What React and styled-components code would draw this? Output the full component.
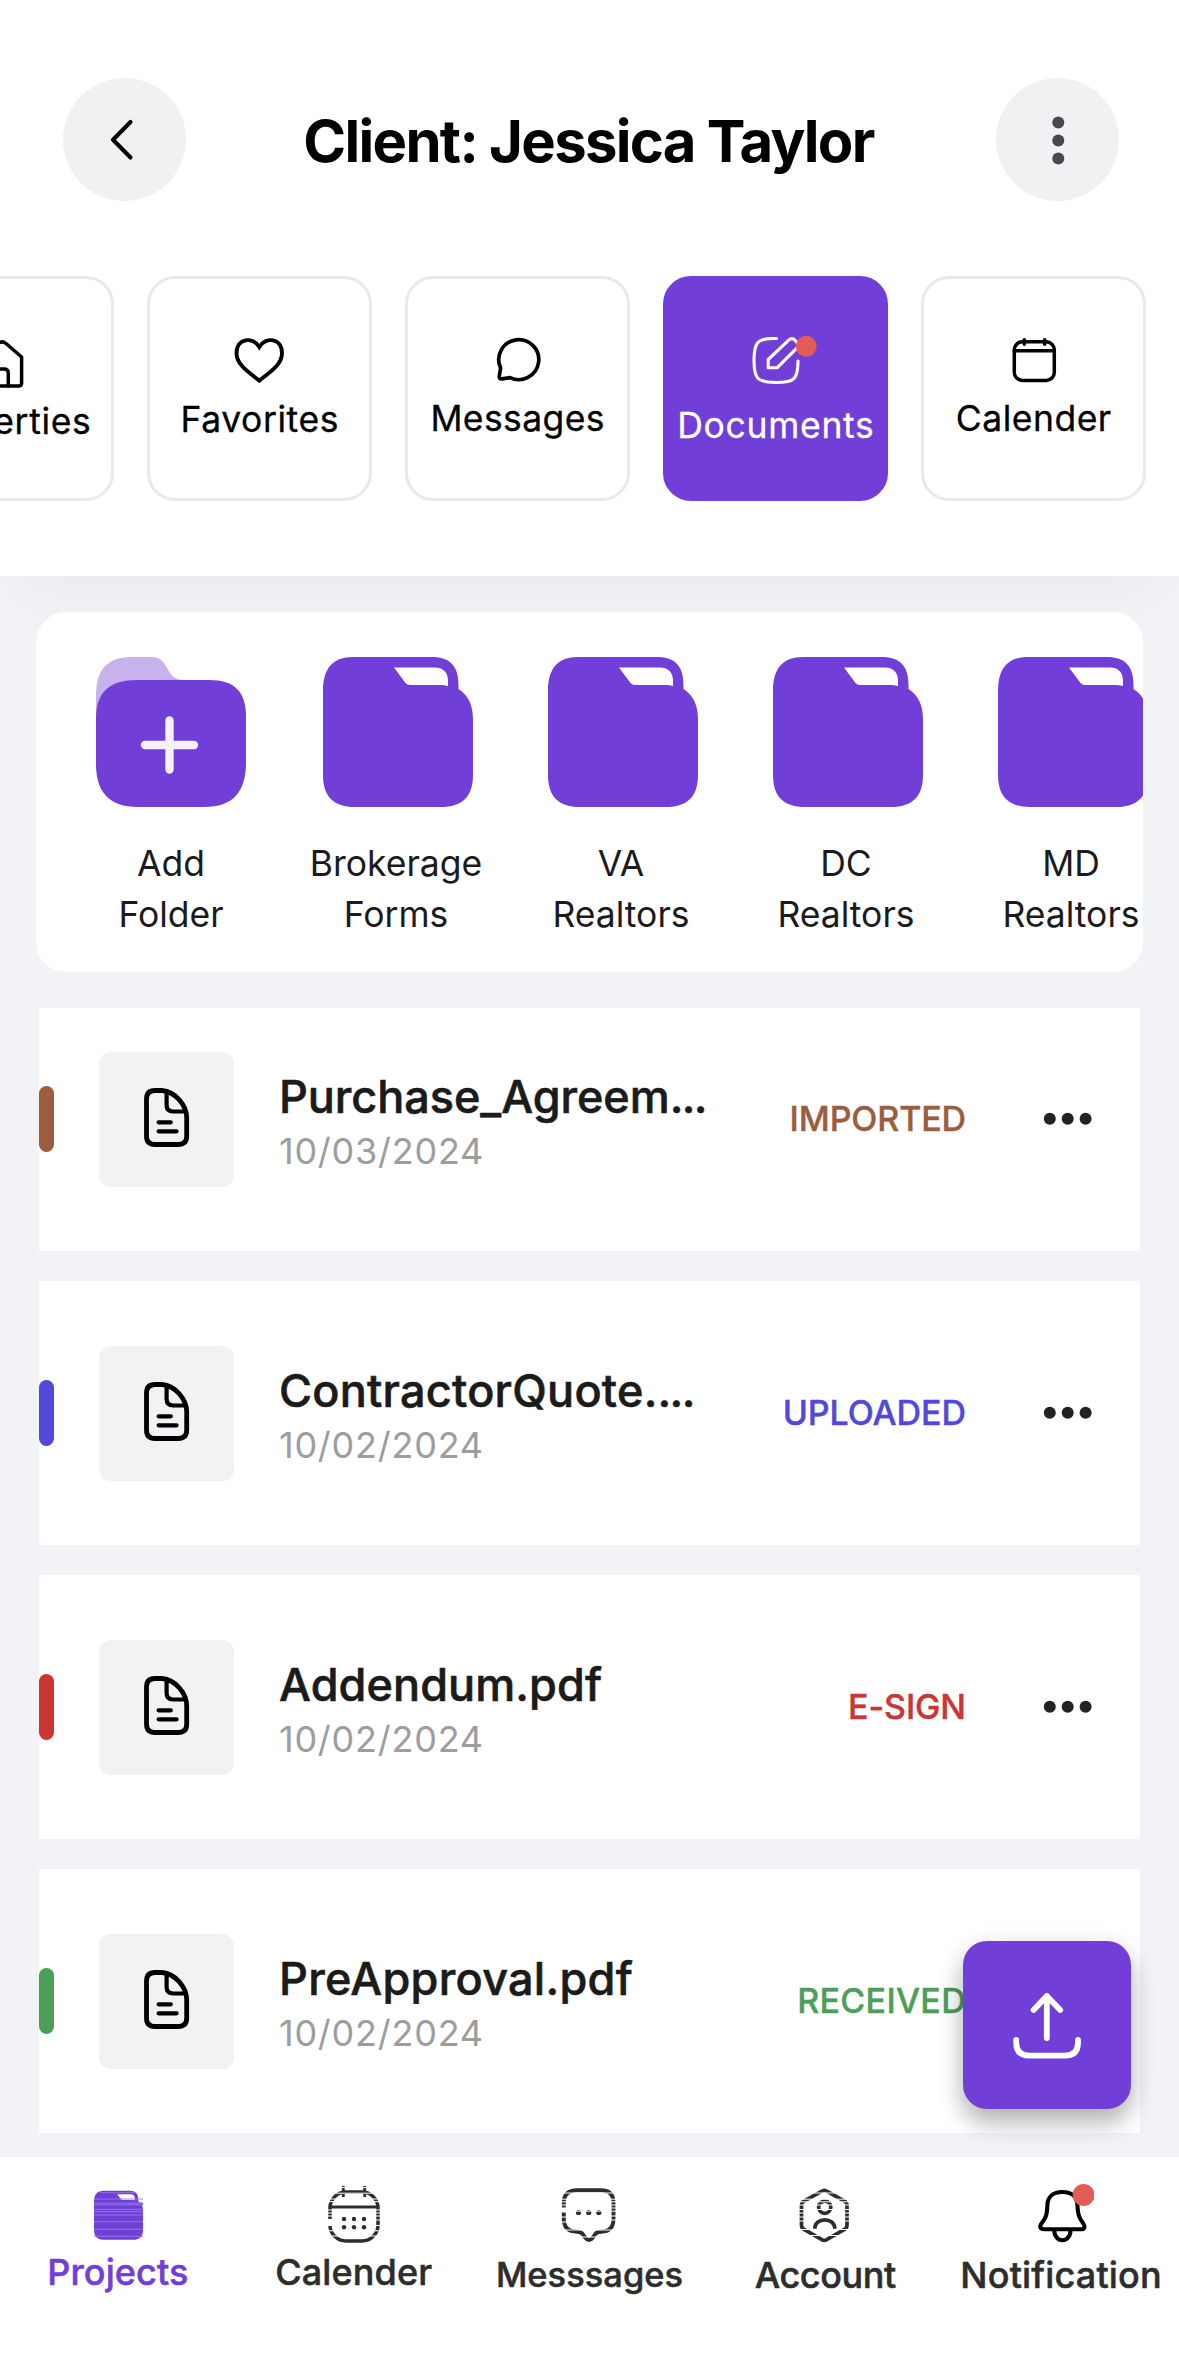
import React from "react";
import styled, { createGlobalStyle } from "styled-components";

const PURPLE = "#713fd8";
const CORAL = "#e25d57";

const GlobalStyle = createGlobalStyle`
  *, *::before, *::after { box-sizing: border-box; }
  body {
    margin: 0;
    background: #f1f3f7;
    font-family: Inter, "Liberation Sans", sans-serif;
  }
  svg { display: block; flex: none; }
`;

const Screen = styled.div`
  position: relative;
  display: flex;
  flex-direction: column;
  width: 1179px;
  height: 2363px;
  overflow: hidden;
  background: #f1f3f7;
`;

/* ---------- header ---------- */

const Header = styled.header`
  flex: none;
  height: 576px;
  padding-top: 78px;
  background: #fff;
  box-shadow: 0 36px 60px -18px rgba(30, 30, 50, 0.04);
`;

const TopBar = styled.div`
  display: flex;
  align-items: center;
  justify-content: space-between;
  height: 123px;
  padding: 0 60px 0 63px;
`;

const RoundButton = styled.button`
  display: flex;
  align-items: center;
  justify-content: center;
  width: 123px;
  height: 123px;
  padding: 0;
  border: 0;
  border-radius: 50%;
  background: #f1f1f4;
`;

const Title = styled.h1`
  margin: 2px 5px 0 0;
  color: #000;
  font-size: 58px;
  font-weight: 700;
  line-height: 70px;
  letter-spacing: -1.7px;
  white-space: nowrap;
`;

const Tabs = styled.nav`
  display: flex;
  justify-content: flex-end;
  gap: 33px;
  margin-top: 75px;
  padding-right: 33px;
  overflow: hidden;
`;

const Tab = styled.div`
  display: flex;
  flex: none;
  flex-direction: column;
  align-items: center;
  width: 225px;
  height: 225px;
  padding-top: 51px;
  border: 3px solid ${(p) => (p.$active ? PURPLE : "#e9e9e9")};
  border-radius: 28px;
  background: ${(p) => (p.$active ? PURPLE : "#fff")};
  color: ${(p) => (p.$active ? "#fff" : "#000")};
`;

const TabLabel = styled.span`
  margin-top: ${(p) => p.$gap}px;
  font-size: 35.5px;
  line-height: 42px;
  letter-spacing: ${(p) => p.$track}px;
  margin-right: ${(p) => -p.$track}px;
  -webkit-text-stroke: 0.3px currentColor;
  white-space: nowrap;
`;

const TabIcon = styled.svg.attrs({ viewBox: "0 0 60 60", fill: "none", stroke: "currentColor" })`
  width: 60px;
  height: 60px;
  overflow: visible;
  stroke-linecap: round;
  stroke-linejoin: round;
`;

/* ---------- folders ---------- */

const FolderPanel = styled.section`
  position: relative;
  display: flex;
  flex: none;
  gap: 50px;
  height: 360px;
  margin: 36px 36px 0;
  padding: 45px 0 0 47.5px;
  overflow: hidden;
  border-radius: 30px;
  background: #fff;
`;

const Folder = styled.div`
  display: flex;
  flex: none;
  flex-direction: column;
  align-items: center;
  width: 175px;
`;

const FolderArt = styled.svg.attrs({ viewBox: "0 0 150 150" })`
  width: 150px;
  height: 150px;
  margin-left: ${(p) => p.$nudge || 0}px;
`;

const FolderLabel = styled.span`
  margin-top: 30.5px;
  color: #1b1b1d;
  font-size: 35.5px;
  line-height: 51px;
  letter-spacing: -0.02px;
  text-align: center;
  white-space: pre;
`;

/* ---------- documents ---------- */

const DocumentList = styled.main`
  display: flex;
  flex: 1;
  flex-direction: column;
  gap: 30px;
  min-height: 0;
  margin-top: 36px;
  padding: 0 39px;
  overflow: hidden;
`;

const DocumentRow = styled.article`
  display: flex;
  flex: none;
  align-items: center;
  height: 264px;
  padding-right: 47px;
  background: #fff;

  &:first-child { margin-top: -21px; }
`;

const StatusBar = styled.i`
  flex: none;
  width: 15px;
  height: 66px;
  border-radius: 8px;
  background: ${(p) => p.$color};
`;

const Thumb = styled.div`
  display: flex;
  flex: none;
  align-items: center;
  justify-content: center;
  width: 135px;
  height: 135px;
  margin: 0 45px;
  border-radius: 12px;
  background: #f2f1f4;
`;

const DocumentText = styled.div`
  flex: 1;
  min-width: 0;
  margin-top: 8px;
`;

const DocumentName = styled.div`
  color: #1b1b1b;
  font-size: 45px;
  font-weight: 500;
  line-height: 56px;
  letter-spacing: ${(p) => p.$track}px;
  -webkit-text-stroke: 0.6px currentColor;
  white-space: nowrap;
`;

const Ellipsis = styled.span`
  letter-spacing: -1.6px;
`;

const DocumentDate = styled.div`
  color: #9d9d9d;
  font-size: 36px;
  line-height: 52px;
  letter-spacing: 0.75px;
`;

const Status = styled.div`
  color: ${(p) => p.$color};
  font-size: 34px;
  font-weight: 500;
  line-height: 40px;
  letter-spacing: ${(p) => p.$track}px;
  -webkit-text-stroke: 0.4px currentColor;
`;

const MoreDots = styled.svg.attrs({ viewBox: "0 0 50 20" })`
  width: 50px;
  height: 20px;
  margin-left: 77px;
`;

const UploadButton = styled.button`
  position: absolute;
  right: 48px;
  bottom: 254px;
  display: flex;
  align-items: center;
  justify-content: center;
  width: 168px;
  height: 168px;
  padding: 0;
  border: 0;
  border-radius: 24px;
  background: ${PURPLE};
  box-shadow: 0 14px 24px rgba(0, 0, 0, 0.28), 0 2px 30px rgba(0, 0, 0, 0.06);
`;

/* ---------- bottom navigation ---------- */

const BottomNav = styled.footer`
  position: relative;
  display: grid;
  flex: none;
  grid-template-columns: repeat(5, 1fr);
  height: 206px;
  padding-top: 26px;
  background: #fff;
`;

const NavItem = styled.div`
  display: flex;
  flex-direction: column;
  align-items: center;
  color: ${(p) => (p.$active ? PURPLE : "#2d2d2d")};
`;

const NavIcon = styled.svg.attrs({ viewBox: "0 0 64 64", fill: "none" })`
  width: 64px;
  height: 64px;
  overflow: visible;
  stroke-linecap: round;
  stroke-linejoin: round;
`;

const NavLabel = styled.span`
  margin-top: ${(p) => p.$gap}px;
  font-size: ${(p) => p.$size || 36}px;
  font-weight: 500;
  line-height: 44px;
  letter-spacing: ${(p) => p.$track}px;
  -webkit-text-stroke: 0.5px currentColor;
  white-space: nowrap;
`;

const folderOutline =
  "M30 0H109C127 0 135.5 9 135.5 28V32C145 38 150 48 150 62V118C150 140 139 150 118 150H32C11 150 0 140 0 118V34C0 11 10 0 30 0Z";
const folderCutout = "M71 10.5H112C120 10.5 125 15 125 24V29Q121 28 118 28H87Q84 28 82.5 26Z";

const FolderShape = () => (
  <path fill={PURPLE} fillRule="evenodd" d={folderOutline + folderCutout} />
);

/* thin horizontal lines across an icon */
const Scanlines = ({ rows, color = "#fff", from = 2, to = 62, weight = 1 }) => (
  <g stroke={color} strokeWidth={weight} strokeLinecap="butt">
    {rows.map((y) => (
      <path key={y} d={`M${from} ${y}H${to}`} />
    ))}
  </g>
);

const tabs = [
  {
    label: "Properties", gap: 11, track: 0.65,
    icon: (
      <TabIcon strokeWidth="3.5">
        <path d="M10 28 26 13.5Q30 10.3 34 13.5L49.6 27V53Q49.6 56 46.6 56H13Q10 56 10 53Z" />
        <path d="M24 56V43Q24 39 28 39H32Q36.3 39 36.3 43V56" />
      </TabIcon>
    ),
  },
  {
    label: "Favorites", gap: 9.3, track: 0.6,
    icon: (
      <TabIcon strokeWidth="3.9">
        <path strokeLinejoin="miter" d="M29.3 17C23 6.5 6.5 7.5 6.5 23.5C6.5 34 17.5 41.5 29.3 50.6C41 41.5 52 34 52 23.5C52 7.5 35.6 6.5 29.3 17Z" />
      </TabIcon>
    ),
  },
  {
    label: "Messages", gap: 8.3, track: 0.4,
    icon: (
      <TabIcon strokeWidth="3.7">
        <path d="M12.6 38 11.3 46Q11 49.3 14.2 48.8L22 47.6A20 20 0 1 0 12.6 38Z" />
      </TabIcon>
    ),
  },
  {
    label: "Documents", gap: 15.3, track: 0.7, active: true,
    icon: (
      <TabIcon strokeWidth="3.1">
        <path d="M30.6 8.5H27C11 8.5 8 13 8 30.5C8 48.5 11 52.5 30 52.5S52 48.5 52 31" />
        <path d="M22.2 37.8V29.5L43 9.8Q46 7.2 49 10.2L51 12.5Q53.5 15.5 50.8 18.2L31 37.8Z" />
        <circle cx="60.2" cy="16.3" r="10.5" fill={CORAL} stroke="none" />
      </TabIcon>
    ),
  },
  {
    label: "Calender", gap: 8.3, track: 0.5,
    icon: (
      <TabIcon strokeWidth="3.5">
        <rect x="10.3" y="11.8" width="40" height="38.6" rx="8" />
        <path d="M10.3 20.8H50.3M20.3 9.7V14.3M40.7 9.7V14.3" />
      </TabIcon>
    ),
  },
];

const folders = ["Brokerage\nForms", "VA\nRealtors", "DC\nRealtors", "MD\nRealtors"];

const documents = [
  { name: "Purchase_Agreem", cut: true, track: -0.05, date: "10/03/2024", status: "IMPORTED", statusTrack: -0.13, color: "#9b5d3d" },
  { name: "ContractorQuote.", cut: true, track: 0.25, date: "10/02/2024", status: "UPLOADED", statusTrack: -0.05, color: "#5148dc" },
  { name: "Addendum.pdf", track: 0.1, date: "10/02/2024", status: "E-SIGN", statusTrack: -0.1, color: "#ca3632" },
  { name: "PreApproval.pdf", track: 0.3, date: "10/02/2024", status: "RECEIVED", statusTrack: 0.3, color: "#4c9f57" },
];

const navItems = [
  {
    label: "Projects", gap: 3, track: 0.1, active: true,
    icon: (
      <NavIcon>
        <g transform="translate(8 7.8) scale(.327)"><FolderShape /></g>
        <Scanlines rows={[16, 26.3, 28.7, 32, 38.7, 46.3, 53.3]} color="#9a78e6" from={8} to={57} weight={0.9} />
        <Scanlines rows={[20.9]} color="#8a62e0" from={8} to={57} weight={3} />
        <Scanlines rows={[9.6]} color="#9a78e6" from={14} to={50} weight={0.8} />
      </NavIcon>
    ),
  },
  {
    label: "Calender", gap: 3, track: 0.12,
    icon: (
      <NavIcon stroke="currentColor" strokeWidth="3.5">
        <rect x="8" y="9" width="48" height="49" rx="16" />
        <path strokeLinecap="butt" d="M8 24H56M21.3 3V14M42.7 3V14" strokeWidth="2.8" />
        <g fill="currentColor" stroke="none">
          {[36, 44.3].map((y) => [22, 32, 42].map((x) => <circle key={`${x}-${y}`} cx={x} cy={y} r="2.2" />))}
        </g>
        <Scanlines rows={[4.5, 10.2, 16, 18.6, 27, 30, 33, 47.8, 53]} />
        <Scanlines rows={[39.5]} from={4} to={12} weight={7} />
        <Scanlines rows={[37, 42.5]} from={50} to={60} />
      </NavIcon>
    ),
  },
  {
    label: "Messsages", gap: 6, track: 0.05, size: 34.4,
    icon: (
      <NavIcon stroke="currentColor" strokeWidth="3.9">
        <path d="M20 7.2H44Q56.5 7.2 56.5 20V36Q56.5 48.5 44 48.7Q39 48.7 37 53Q32 61 27 53Q25 48.7 20 48.7Q6.8 48.5 6.8 36V20Q6.8 7.2 20 7.2Z" />
        <g fill="currentColor" stroke="none">
          {[21.5, 31.7, 41.8].map((x) => <circle key={x} cx={x} cy="29.5" r="2.6" />)}
        </g>
        <Scanlines rows={[10, 16.2, 18.8, 28.2, 47, 54]} />
        <Scanlines rows={[22, 25, 33, 37]} from={50} to={60} />
        <Scanlines rows={[27]} from={3} to={10} weight={5} />
        <Scanlines rows={[22, 34, 39]} from={3} to={10} />
      </NavIcon>
    ),
  },
  {
    label: "Account", gap: 6, track: -0.4,
    icon: (
      <NavIcon stroke="currentColor" strokeWidth="3.7">
        <path d="M28.5 8.4Q31.3 6.2 34.1 8.4L51.5 18.2Q54 19.6 54 22.5V42Q54 45 51.5 46.4L34.1 56.4Q31.3 58.4 28.5 56.4L11 46.4Q8.5 45 8.5 42V22.5Q8.5 19.6 11 18.2Z" />
        <circle cx="31.7" cy="24.2" r="6.1" />
        <path strokeLinecap="butt" d="M21.8 45.8C21.8 33.8 41.8 33.8 41.8 45.8" />
        <Scanlines rows={[10, 16.2, 18.8, 22, 26.5, 46.5, 52.5]} />
        <Scanlines rows={[30, 34, 38]} from={4} to={12} />
        <Scanlines rows={[30, 34, 38]} from={50} to={60} />
      </NavIcon>
    ),
  },
  {
    label: "Notification", gap: 6, track: 0.18,
    icon: (
      <NavIcon stroke="#000" strokeWidth="4.1">
        <path d="M33.4 9C24 9 18.6 14 18.4 22C18 32 17 35 12.5 40.5C10 44 11.5 46.3 15 46.3H52C55.5 46.3 56.5 44 54.3 40.5C50 35 49 32 48.4 22C48 14 43 9 33.4 9Z" />
        <path d="M25.3 47C25.3 60.7 41.5 60.7 41.5 47" />
        <clipPath id="badge-edge"><rect x="40" y="0" width="25" height="26" /></clipPath>
        <circle cx="54.6" cy="12" r="11" fill={CORAL} stroke="none" clipPath="url(#badge-edge)" />
      </NavIcon>
    ),
  },
];

const DocumentIcon = () => (
  <svg width="64" height="64" viewBox="0 0 64 64" fill="none" stroke="#000" strokeWidth="4.8" strokeLinecap="round" strokeLinejoin="round">
    <path d="M20 3.5H27C40 4.5 51.7 18 51.7 31V49Q51.7 57.5 43 57.5H20Q11.5 57.5 11.5 49V12Q11.5 3.5 20 3.5Z" />
    <path strokeWidth="4.2" d="M31.6 5V18Q31.6 24.5 38 24.5H50M23.6 35.3H35.8M23.6 44.3H41.6" />
  </svg>
);

export default function App() {
  return (
    <Screen>
      <GlobalStyle />
      <Header>
        <TopBar>
          <RoundButton aria-label="Back">
            <svg width="40" height="50" viewBox="0 0 40 50" fill="none" stroke="#000" strokeWidth="4.1" strokeLinecap="round" strokeLinejoin="round">
              <path d="M25.5 7 8 24.7 25.5 42.5" />
            </svg>
          </RoundButton>
          <Title>Client: Jessica Taylor</Title>
          <RoundButton aria-label="More">
            <svg width="20" height="60" viewBox="0 0 20 60" fill="#4a484f">
              <circle cx="10.3" cy="12.5" r="6" />
              <circle cx="10.3" cy="30.5" r="6" />
              <circle cx="10.3" cy="48.5" r="6" />
            </svg>
          </RoundButton>
        </TopBar>
        <Tabs>
          {tabs.map((t) => (
            <Tab key={t.label} $active={t.active}>
              {t.icon}
              <TabLabel $gap={t.gap} $track={t.track}>{t.label}</TabLabel>
            </Tab>
          ))}
        </Tabs>
      </Header>

      <FolderPanel>
        <Folder>
          <FolderArt>
            <path fill="#c7b2ee" d="M0 70V38C0 12 12 0 36 0H56C64 0 67 4 71 11C76 20 79 23 90 23V70Z" />
            <path fill={PURPLE} d="M42 23H113C139 23 150 35 150 60V105C150 135 137 150 108 150H42C13 150 0 135 0 107V62C0 35 13 23 42 23Z" />
            <path stroke="#f5f1fa" strokeWidth="8.4" strokeLinecap="round" d="M49 88H98M73.5 63.5V112.5" />
          </FolderArt>
          <FolderLabel>{"Add\nFolder"}</FolderLabel>
        </Folder>
        {folders.map((name) => (
          <Folder key={name}>
            <FolderArt $nudge={4}><FolderShape /></FolderArt>
            <FolderLabel>{name}</FolderLabel>
          </Folder>
        ))}
      </FolderPanel>

      <DocumentList>
        {documents.map((d) => (
          <DocumentRow key={d.name}>
            <StatusBar $color={d.color} />
            <Thumb><DocumentIcon /></Thumb>
            <DocumentText>
              <DocumentName $track={d.track}>{d.name}{d.cut && <Ellipsis>...</Ellipsis>}</DocumentName>
              <DocumentDate>{d.date}</DocumentDate>
            </DocumentText>
            <Status $color={d.color} $track={d.statusTrack}>{d.status}</Status>
            <MoreDots fill="#222">
              <circle cx="6.8" cy="9.7" r="6" />
              <circle cx="24.7" cy="9.7" r="6" />
              <circle cx="42.6" cy="9.7" r="6" />
            </MoreDots>
          </DocumentRow>
        ))}
      </DocumentList>

      <UploadButton aria-label="Upload">
        <svg width="80" height="80" viewBox="0 0 80 80" fill="none" stroke="#fff" strokeWidth="5.8" strokeLinecap="round" strokeLinejoin="round">
          <path d="M39.8 53V11M26.6 25 39.8 11 53.2 25" />
          <path d="M9.2 54.8V57.5Q9.2 70.6 22 70.6H58Q71 70.6 71 57.5V54.8" />
        </svg>
      </UploadButton>

      <BottomNav>
        {navItems.map((n) => (
          <NavItem key={n.label} $active={n.active}>
            {n.icon}
            <NavLabel $gap={n.gap} $track={n.track} $size={n.size}>{n.label}</NavLabel>
          </NavItem>
        ))}
      </BottomNav>
    </Screen>
  );
}
